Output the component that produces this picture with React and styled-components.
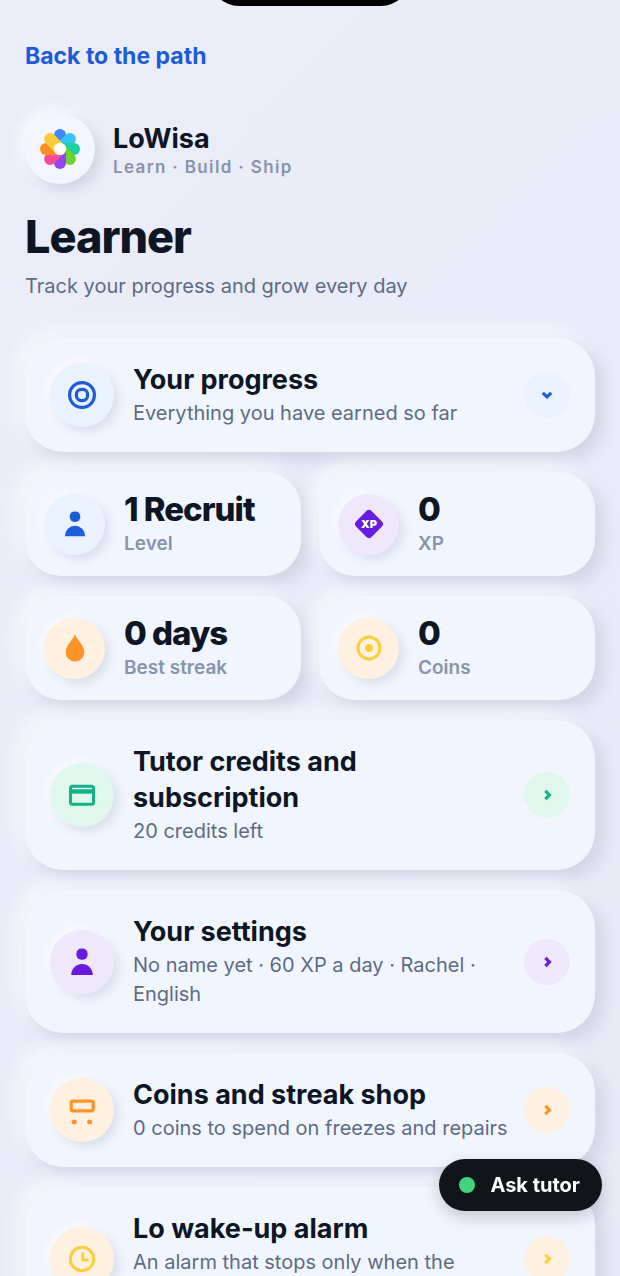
import React from 'react'
import styled, { createGlobalStyle } from 'styled-components'

const tones = {
  blue: { color: '#1d5bd8', soft: '#e9f2fe' },
  purple: { color: '#6a1be0', soft: '#efe8fd' },
  orange: { color: '#fd9426', soft: '#fff1e0' },
  yellow: { color: '#fdcd3c', soft: '#fff1e0' },
  green: { color: '#14b287', soft: '#e0f7ed' },
}

const petals = ['#3f86f7', '#35c5f5', '#1fcfa4', '#6fd22e', '#8f45f2', '#fa4a9c', '#fd8f22', '#fdcb3b']

function Logo() {
  return (
    <svg width="42" height="42" viewBox="-21 -21 42 42" aria-hidden="true">
      {petals.map((fill, i) => (
        <rect key={fill} x="-6" y="-20" width="12" height="22" rx="6" transform={`rotate(${i * 45})`} fill={fill} />
      ))}
      <circle r="6.2" fill="#fff" />
    </svg>
  )
}

function TargetIcon() {
  return (
    <svg width="30" height="30" viewBox="0 0 30 30" fill="none" stroke="currentColor" strokeWidth="3.2" aria-hidden="true">
      <circle cx="15" cy="15" r="12.4" />
      <rect x="9.4" y="9.4" width="11.2" height="11.2" rx="5" />
    </svg>
  )
}

function PersonIcon({ size = 30 }) {
  return (
    <svg width={size} height={size} viewBox="0 0 30 30" fill="currentColor" aria-hidden="true">
      <rect x="9.4" y="1.6" width="11.2" height="11.2" rx="5" />
      <path d="M4.2 28 A10.8 11 0 0 1 25.8 28 Z" />
    </svg>
  )
}

function XpIcon() {
  return (
    <svg width="30" height="30" viewBox="0 0 30 30" aria-hidden="true">
      <rect x="4" y="4" width="22" height="22" rx="4" transform="rotate(45 15 15)" fill="currentColor" />
      <text x="15" y="19" textAnchor="middle" fontFamily="Inter, sans-serif" fontSize="11" fontWeight="900" fill="#fff">XP</text>
    </svg>
  )
}

function DropIcon() {
  return (
    <svg width="30" height="30" viewBox="0 0 30 30" fill="currentColor" aria-hidden="true">
      <path d="M15 1 C16 6 24.3 12 24.3 19.2 A9.3 9.3 0 0 1 5.7 19.2 C5.7 12 14 6 15 1 Z" />
    </svg>
  )
}

function CoinIcon() {
  return (
    <svg width="30" height="30" viewBox="0 0 30 30" fill="none" aria-hidden="true">
      <circle cx="15" cy="15" r="11" stroke="currentColor" strokeWidth="3" />
      <circle cx="15" cy="15" r="4" fill="currentColor" />
    </svg>
  )
}

function CardIcon() {
  return (
    <svg width="30" height="30" viewBox="0 0 30 30" fill="none" aria-hidden="true">
      <rect x="3.5" y="6.2" width="23" height="18" rx="2" stroke="currentColor" strokeWidth="3" />
      <path d="M4 11.5 H26" stroke="currentColor" strokeWidth="4.4" />
    </svg>
  )
}

function CartIcon() {
  return (
    <svg width="30" height="30" viewBox="0 0 30 30" fill="none" aria-hidden="true">
      <rect x="4.2" y="6.2" width="22" height="9.6" rx="1.5" stroke="currentColor" strokeWidth="3.2" />
      <circle cx="7.2" cy="27" r="2.5" fill="currentColor" />
      <circle cx="22.6" cy="27" r="2.5" fill="currentColor" />
    </svg>
  )
}

function ClockIcon() {
  return (
    <svg width="30" height="30" viewBox="0 0 30 30" fill="none" stroke="currentColor" strokeWidth="3" aria-hidden="true">
      <circle cx="15" cy="15" r="11.7" />
      <path d="M15.8 8.5 V16 H21.5" />
    </svg>
  )
}

function Chevron({ down }) {
  return (
    <svg width="16" height="16" viewBox="0 0 16 16" fill="none" stroke="currentColor" strokeWidth="3.2" aria-hidden="true">
      <path d={down ? 'M3.8 5.8 L8 9.8 L12.2 5.8' : 'M6.4 3.8 L10.4 8 L6.4 12.2'} />
    </svg>
  )
}

const stats = [
  { value: '1 Recruit', label: 'Level', tone: 'blue', icon: <PersonIcon size={28} /> },
  { value: '0', label: 'XP', tone: 'purple', icon: <XpIcon /> },
  { value: '0 days', label: 'Best streak', tone: 'orange', icon: <DropIcon /> },
  { value: '0', label: 'Coins', tone: 'yellow', icon: <CoinIcon /> },
]

const sections = [
  { id: 'credits', title: 'Tutor credits and subscription', text: '20 credits left', tone: 'green', icon: <CardIcon /> },
  { id: 'settings', title: 'Your settings', text: 'No name yet · 60 XP a day · Rachel · English', tone: 'purple', icon: <PersonIcon /> },
  { id: 'shop', title: 'Coins and streak shop', text: '0 coins to spend on freezes and repairs', tone: 'orange', icon: <CartIcon /> },
  { id: 'alarm', title: 'Lo wake-up alarm', text: 'An alarm that stops only when the lesson is done', tone: 'yellow', icon: <ClockIcon /> },
]

function SectionContent({ title, text, tone, icon, down }) {
  return (
    <>
      <Badge $tone={tone}>{icon}</Badge>
      <CardText>
        <CardTitle>{title}</CardTitle>
        <CardNote>{text}</CardNote>
      </CardText>
      <Arrow $tone={tone}><Chevron down={down} /></Arrow>
    </>
  )
}

function App() {
  return (
    <Screen>
      <GlobalStyle />
      <Island />
      <Page>
        <BackLink href="#path">Back to the path</BackLink>
        <Brand>
          <BrandMark><Logo /></BrandMark>
          <BrandText>
            <BrandName>LoWisa</BrandName>
            <Tagline>Learn · Build · Ship</Tagline>
          </BrandText>
        </Brand>
        <Heading>Learner</Heading>
        <Intro>Track your progress and grow every day</Intro>
        <Stack>
          <ToggleCard type="button" aria-expanded="true">
            <SectionContent
              title="Your progress"
              text="Everything you have earned so far"
              tone="blue"
              icon={<TargetIcon />}
              down
            />
          </ToggleCard>
          <Stats>
            {stats.map((stat) => (
              <StatCard key={stat.label}>
                <Badge $tone={stat.tone} $small>{stat.icon}</Badge>
                <StatText>
                  <StatValue>{stat.value}</StatValue>
                  <StatLabel>{stat.label}</StatLabel>
                </StatText>
              </StatCard>
            ))}
          </Stats>
          {sections.map(({ id, ...section }) => (
            <LinkCard key={id} href={`#${id}`}>
              <SectionContent {...section} />
            </LinkCard>
          ))}
        </Stack>
      </Page>
      <AskButton type="button"><Dot />Ask tutor</AskButton>
    </Screen>
  )
}

export default App

const GlobalStyle = createGlobalStyle`
  * {
    box-sizing: border-box;
  }
  body {
    margin: 0;
    font-family: Inter, sans-serif;
    color: #0e1524;
    background: #e9ecf8;
  }
  p, h1 {
    margin: 0;
  }
`;

const Screen = styled.div`
  height: 100vh;
  overflow-y: auto;
  scrollbar-width: none;
  background: linear-gradient(135deg, #ebeef8 0%, #e9ecf8 50%, #e6eaf5 100%);
`;

const Island = styled.div`
  position: fixed;
  top: -52px;
  left: 50%;
  width: 200px;
  height: 58px;
  margin-left: -100px;
  border-radius: 29px;
  background: #000;
`;

const Page = styled.main`
  padding: 40px 25px;
`;

const BackLink = styled.a`
  display: block;
  width: fit-content;
  font-size: 23px;
  font-weight: 700;
  line-height: 32px;
  color: #1d5bd8;
  text-decoration: none;
`;

const Brand = styled.div`
  display: flex;
  align-items: center;
  gap: 18px;
  margin-top: 42px;
`;

const BrandMark = styled.div`
  display: grid;
  place-items: center;
  width: 70px;
  height: 70px;
  border-radius: 50%;
  background: #f3f6fe;
  box-shadow: 6px 6px 12px #cfd7e4, -6px -6px 12px #f8f9fd;
`;

const BrandText = styled.div`
  padding-top: 4px;
`;

const BrandName = styled.p`
  font-size: 27px;
  font-weight: 700;
  line-height: 32px;
`;

const Tagline = styled.p`
  font-size: 17px;
  font-weight: 600;
  line-height: 24px;
  letter-spacing: 0.08em;
  color: #8794ab;
`;

const Heading = styled.h1`
  margin-top: 28px;
  font-size: 45px;
  font-weight: 800;
  line-height: 50px;
  letter-spacing: -1px;
`;

const Intro = styled.p`
  margin-top: 10px;
  font-size: 20px;
  line-height: 29px;
  color: #5d6b85;
`;

const Stack = styled.div`
  display: flex;
  flex-direction: column;
  gap: 20px;
  margin-top: 37px;
`;

const Surface = styled.div`
  display: flex;
  align-items: center;
  background: #f1f5fe;
  box-shadow: 8px 8px 18px #cdd5e4, -8px -8px 16px #f6f8fc;
`;

const LinkCard = styled(Surface).attrs({ as: 'a' })`
  padding: 24px 25px;
  border-radius: 38px;
  color: inherit;
  text-decoration: none;
`;

const ToggleCard = styled(Surface).attrs({ as: 'button' })`
  width: 100%;
  padding: 24px 25px;
  border: 0;
  border-radius: 38px;
  font: inherit;
  color: inherit;
  text-align: left;
  cursor: pointer;
`;

const Badge = styled.span`
  display: grid;
  place-items: center;
  flex: none;
  width: ${({ $small }) => ($small ? '61px' : '64px')};
  height: ${({ $small }) => ($small ? '61px' : '64px')};
  border-radius: 50%;
  color: ${({ $tone }) => tones[$tone].color};
  background: ${({ $tone }) => tones[$tone].soft};
  box-shadow: 5px 5px 10px #d9e0ec, -4px -4px 8px #f9fafe;
`;

const CardText = styled.span`
  display: flex;
  flex: 1;
  flex-direction: column;
  gap: 1px;
  min-width: 0;
  padding: 0 10px 0 19px;
`;

const CardTitle = styled.span`
  font-size: 27px;
  font-weight: 700;
  line-height: 36px;
`;

const CardNote = styled.span`
  font-size: 20px;
  line-height: 29px;
  color: #5d6b85;
`;

const Arrow = styled.span`
  display: grid;
  place-items: center;
  flex: none;
  width: 46px;
  height: 46px;
  border-radius: 50%;
  color: ${({ $tone }) => tones[$tone].color};
  background: ${({ $tone }) => tones[$tone].soft};
`;

const Stats = styled.div`
  display: grid;
  grid-template-columns: 1fr 1fr;
  gap: 20px 18px;
`;

const StatCard = styled(Surface)`
  padding: 16px 19px;
  border-radius: 36px;
`;

const StatText = styled.div`
  padding: 0 0 2px 19px;
`;

const StatValue = styled.p`
  font-size: 33px;
  font-weight: 800;
  line-height: 42px;
  letter-spacing: -1px;
`;

const StatLabel = styled.p`
  font-size: 19px;
  font-weight: 600;
  line-height: 28px;
  color: #8794ab;
`;

const AskButton = styled.button`
  position: fixed;
  right: 18px;
  bottom: 65px;
  display: flex;
  align-items: center;
  gap: 15px;
  height: 52px;
  padding: 0 22px 0 20px;
  border: 0;
  border-radius: 26px;
  font: 700 20px Inter, sans-serif;
  color: #fff;
  background: #10151a;
  box-shadow: 0 6px 16px rgba(16, 21, 26, 0.2);
  cursor: pointer;
`;

const Dot = styled.span`
  width: 16px;
  height: 16px;
  border-radius: 50%;
  background: #43d57e;
`;
